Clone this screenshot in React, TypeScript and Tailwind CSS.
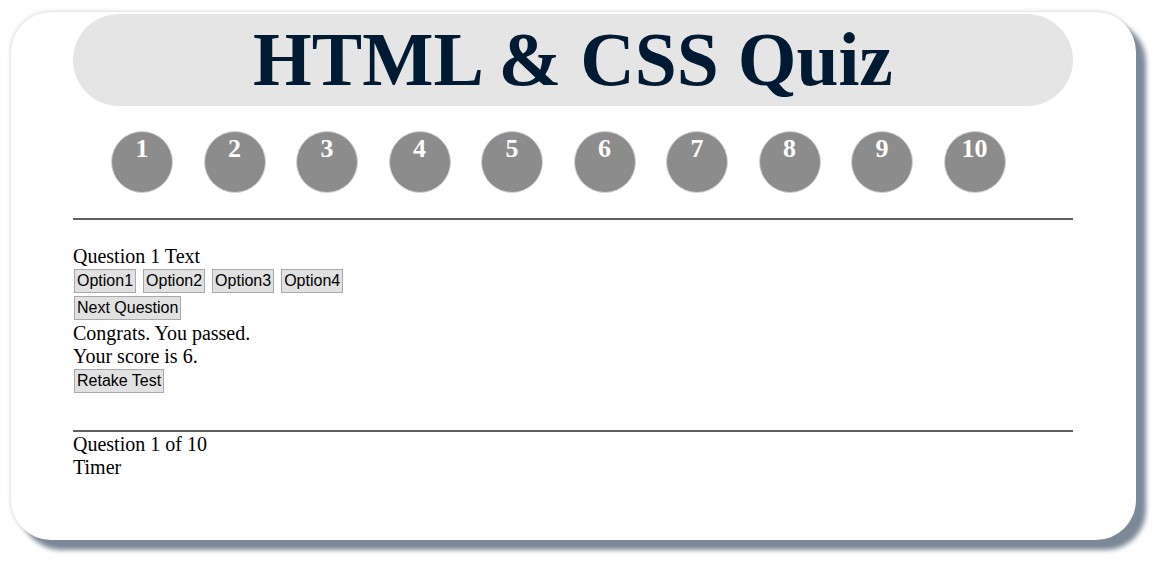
import React from 'react';

const serif = { fontFamily: '"Liberation Serif", "Times New Roman", serif' };

const OPTIONS = ['Option1', 'Option2', 'Option3', 'Option4'];
const NUMBERS = [1, 2, 3, 4, 5, 6, 7, 8, 9, 10];

function QuizButton({ children }: { children: React.ReactNode }) {
  return (
    <button className="h-[24px] border border-[#a9a9a9] bg-[#e1e1e1] px-[2px] font-['Liberation_Sans',Arial,sans-serif] text-[16px] leading-[20px] text-black">
      {children}
    </button>
  );
}

export default function App() {
  return (
    <div className="min-h-[562px] bg-white pl-[11px] pt-[12px]" style={serif}>
      <div className="h-[528px] w-[1125px] rounded-[40px] bg-white pt-[2px] shadow-[10px_10px_5px_#7b8898,0_0_4px_#c8c8c8]">
        <div className="ml-[62px] w-[1000px]">
          {/* Title */}
          <div className="flex h-[92px] items-center justify-center rounded-full bg-[#e5e5e5]">
            <h1 className="text-[75.5px] font-bold leading-none text-[#011a33]">HTML &amp; CSS Quiz</h1>
          </div>

          {/* Question circles */}
          <div className="mt-[25px] flex gap-[30.5px] pl-[38px]">
            {NUMBERS.map((n) => (
              <div
                key={n}
                className="flex h-[62px] w-[62px] shrink-0 justify-center rounded-full border border-[#d4d4d4] bg-[#8c8c8c] pt-[2px] text-[26px] font-bold leading-[29px] text-white"
              >
                {n}
              </div>
            ))}
          </div>

          <div className="mt-[25px] h-[2px] bg-[#5f5f5f]" />

          {/* Question area */}
          <div className="mt-[25px] text-[20px] leading-[23px] text-black">
            <div>Question 1 Text</div>
            <div className="mt-[1px] flex gap-[7px] pl-[1px]">
              {OPTIONS.map((o) => (
                <QuizButton key={o}>{o}</QuizButton>
              ))}
            </div>
            <div className="mt-[2px] pl-[1px]">
              <QuizButton>Next Question</QuizButton>
            </div>
            <div className="mt-[2px]">Congrats. You passed.</div>
            <div>Your score is 6.</div>
            <div className="pl-[1px]">
              <QuizButton>Retake Test</QuizButton>
            </div>
          </div>

          <div className="mt-[37px] h-[2px] bg-[#5f5f5f]" />

          <div className="mt-[1px] text-[20px] leading-[23px] text-black">
            <div>Question 1 of 10</div>
            <div>Timer</div>
          </div>
        </div>
      </div>
    </div>
  );
}
